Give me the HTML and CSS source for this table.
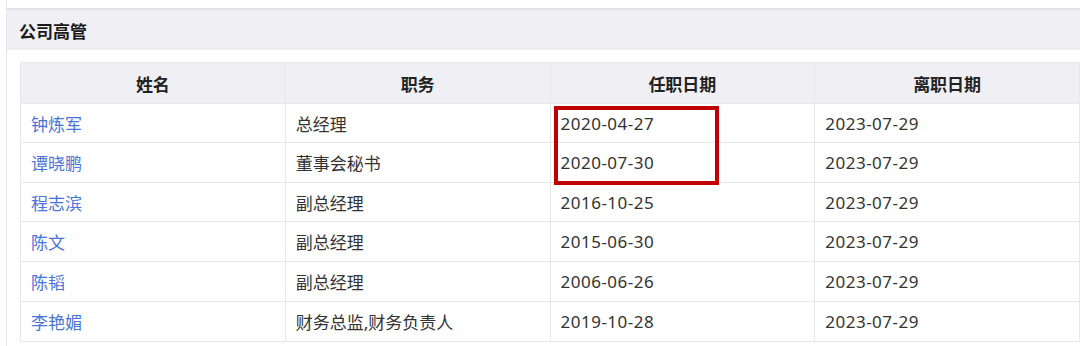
FILE: index.html
```html
<!DOCTYPE html>
<html lang="zh-CN">
<head>
<meta charset="utf-8">
<title>公司高管</title>
<link rel="stylesheet" href="styles.css">
</head>
<body>
<div class="page">
  <div class="prev"></div>
  <div class="section-title">公司高管</div>
  <div class="content">
    <table class="exec">
      <thead>
        <tr><th>姓名</th><th>职务</th><th>任职日期</th><th>离职日期</th></tr>
      </thead>
      <tbody>
        <tr class="short"><td><a class="name">钟炼军</a></td><td>总经理</td><td class="date mark-cell"><div class="mark"></div>2020-04-27</td><td class="date">2023-07-29</td></tr>
        <tr><td><a class="name">谭晓鹏</a></td><td>董事会秘书</td><td class="date">2020-07-30</td><td class="date">2023-07-29</td></tr>
        <tr class="short"><td><a class="name">程志滨</a></td><td>副总经理</td><td class="date">2016-10-25</td><td class="date">2023-07-29</td></tr>
        <tr><td><a class="name">陈文</a></td><td>副总经理</td><td class="date">2015-06-30</td><td class="date">2023-07-29</td></tr>
        <tr><td><a class="name">陈韬</a></td><td>副总经理</td><td class="date">2006-06-26</td><td class="date">2023-07-29</td></tr>
        <tr><td><a class="name">李艳媚</a></td><td>财务总监,财务负责人</td><td class="date">2019-10-28</td><td class="date">2023-07-29</td></tr>
      </tbody>
    </table>
  </div>
</div>
</body>
</html>
```
FILE: styles.css
```css
html, body {
  margin: 0;
  padding: 0;
  background: #ffffff;
}
body {
  font-family: "Noto Sans", "Noto Sans CJK SC", sans-serif;
  color: #333333;
}
.page {
  margin-left: 6px;
  border-left: 1px solid #e6e6ea;
  height: 346px;
}
.prev {
  height: 8px;
  border-bottom: 2px solid #e2e2e8;
}
.section-title {
  height: 40px;
  background: #efeff4;
  padding-left: 12px;
  display: flex;
  align-items: center;
  font-size: 17px;
  font-weight: 700;
  color: #1a1a1a;
}
.content {
  padding: 12px 0 0 13px;
}
.exec {
  width: 1060px;
  border-collapse: collapse;
  table-layout: fixed;
  font-size: 17px;
}
.exec th, .exec td {
  border: 1px solid #e8e8ec;
  height: 39px;
  padding: 0 10px;
  text-align: left;
  white-space: nowrap;
}
.exec tr.short td {
  height: 38px;
}
.exec th {
  height: 40px;
  background: #f0f0f4;
  text-align: center;
  font-weight: 700;
  color: #222222;
}
.exec td {
  color: #333333;
}
.exec td.date {
  letter-spacing: 0.5px;
}
.name {
  color: #4a74dc;
  text-decoration: none;
}
.mark-cell {
  position: relative;
}
.mark {
  position: absolute;
  left: 3px;
  top: 2px;
  width: 157px;
  height: 71px;
  border: 4px solid #c00000;
}
```
